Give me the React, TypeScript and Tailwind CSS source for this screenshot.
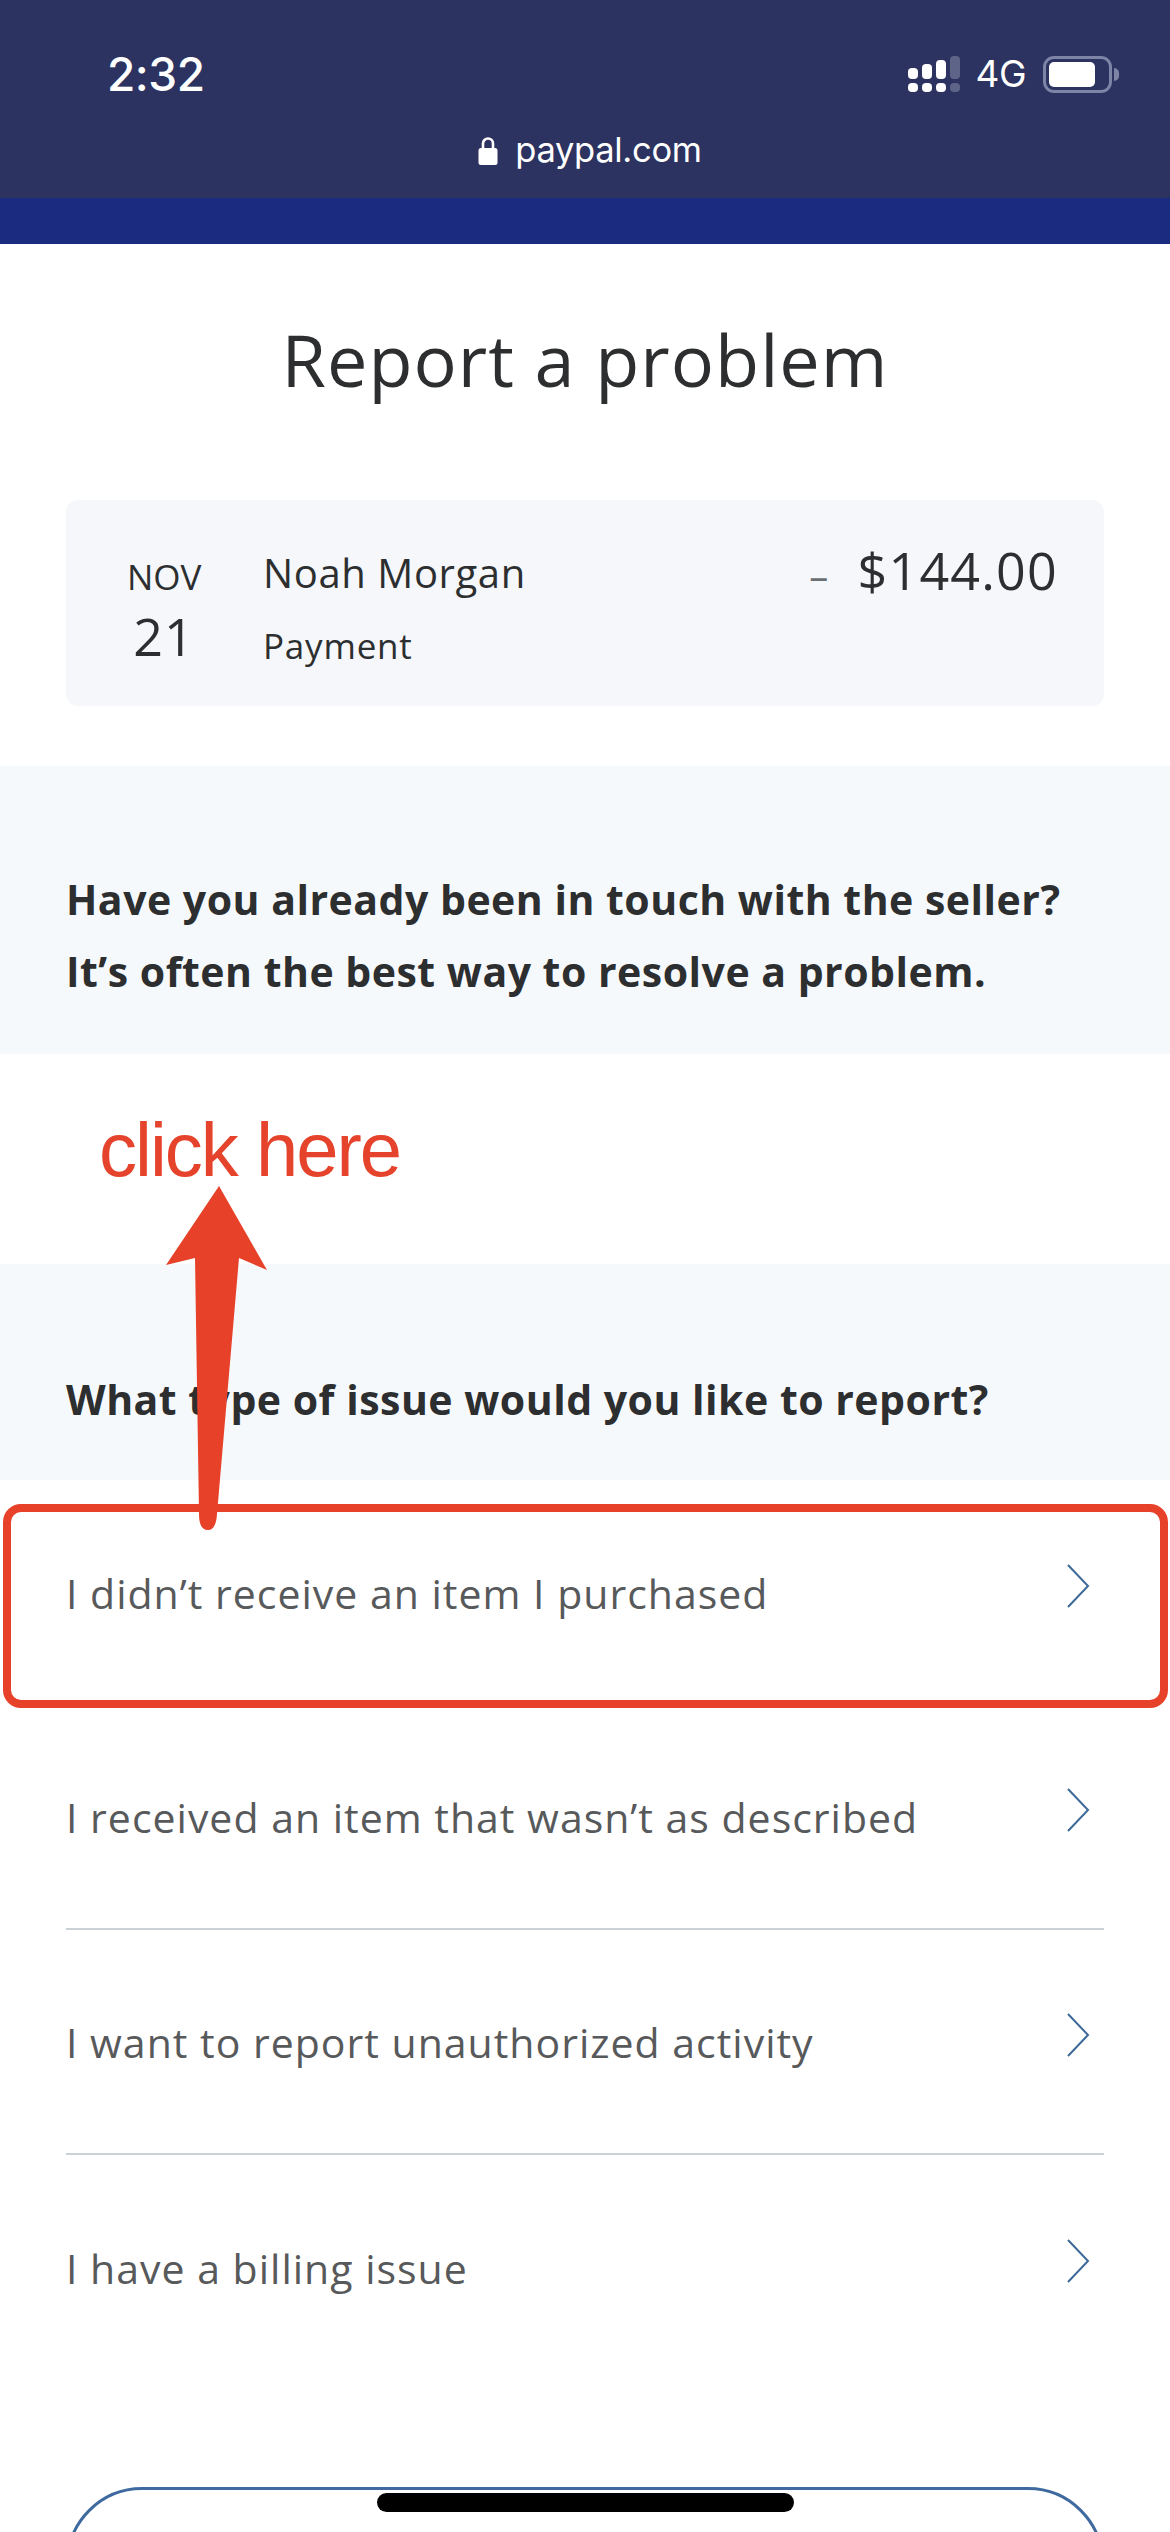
const ISSUES = [
  { label: 'I didn’t receive an item I purchased', divider: false },
  { label: 'I received an item that wasn’t as described', divider: true },
  { label: 'I want to report unauthorized activity', divider: true },
  { label: 'I have a billing issue', divider: false },
]

function SignalIcon() {
  return (
    <svg width="52" height="36" viewBox="0 0 52 36">
      <g fill="#ffffff">
        <rect x="0" y="12" width="10" height="11" rx="4" />
        <rect x="14" y="8" width="10" height="15" rx="4" />
        <rect x="28" y="4" width="10" height="19" rx="4" />
        <rect x="0" y="27" width="10" height="9" rx="4" />
        <rect x="14" y="27" width="10" height="9" rx="4" />
        <rect x="28" y="27" width="10" height="9" rx="4" />
      </g>
      <g fill="#5d6488">
        <rect x="42" y="0" width="10" height="23" rx="4" />
        <rect x="42" y="27" width="10" height="9" rx="4" />
      </g>
    </svg>
  )
}

function BatteryIcon() {
  return (
    <div className="flex items-center gap-[2px]">
      <div className="w-[69px] h-[37px] rounded-[11px] border-[3px] border-[#7e84a6] p-[3px]">
        <div className="w-[46px] h-full rounded-[5px] bg-white" />
      </div>
      <div className="w-[5px] h-[13px] rounded-r-full bg-[#7e84a6]" />
    </div>
  )
}

function LockIcon() {
  return (
    <svg width="20" height="29" viewBox="0 0 20 29">
      <path d="M5 13V7.5a5 5 0 0 1 10 0V13" fill="none" stroke="#ffffff" strokeWidth="2.6" />
      <rect x="0.5" y="12" width="19" height="17" rx="2.5" fill="#ffffff" />
    </svg>
  )
}

function Chevron() {
  return (
    <svg className="mb-[14px] mr-[14px]" width="24" height="46" viewBox="0 0 24 46">
      <path d="M2 2 L22 23 L2 44" fill="none" stroke="#3d6a99" strokeWidth="2" />
    </svg>
  )
}

function Annotation() {
  return (
    <>
      <div className="absolute left-[99px] top-[1098px] font-['Liberation_Sans',sans-serif] text-[76px] leading-[104px] tracking-[-2px] text-[#e5432c]">
        click here
      </div>
      <div className="absolute left-[3px] top-[1504px] w-[1165px] h-[204px] rounded-[18px] border-[8px] border-[#e8412a]" />
      <svg className="absolute left-0 top-0" width="1170" height="2532" viewBox="0 0 1170 2532">
        <path
          d="M219 1186 L267 1270 L239 1258 L217 1514 Q216 1530 208 1530 Q199 1530 199 1514 L195 1258 L166 1265 Z"
          fill="#e8412a"
        />
      </svg>
    </>
  )
}

export default function App() {
  return (
    <div className="relative w-[1170px] h-[2532px] overflow-hidden bg-white font-['Open_Sans',sans-serif] text-[#2c2e2f]">
      {/* Browser chrome */}
      <div className="h-[198px] bg-[#2c3360] text-white flex flex-col">
        <div className="flex items-center justify-between pl-[107px] pr-[51px] pt-[48px]">
          <span className="font-['Inter',sans-serif] font-medium text-[46px] leading-[52px] tracking-[-0.5px]">2:32</span>
          <div className="flex items-center">
            <SignalIcon />
            <span className="ml-[15px] mr-[17px] font-['Inter',sans-serif] text-[37px] leading-[44px] tracking-[-0.5px]">4G</span>
            <BatteryIcon />
          </div>
        </div>
        <div className="flex items-center justify-center gap-[17px] mt-[28px] pl-[10px]">
          <LockIcon />
          <span className="font-['Inter',sans-serif] text-[34.5px] leading-[44px] tracking-[-0.3px]">paypal.com</span>
        </div>
      </div>
      <div className="h-[46px] bg-[#1b2b80]" />

      <h1 className="mt-[75px] text-center font-normal text-[72px] leading-[80px] tracking-[1px]">Report a problem</h1>

      {/* Transaction */}
      <div className="mt-[101px] mx-[66px] h-[206px] rounded-[12px] bg-[#f5f7fa] flex pl-[61px] pr-[46px]">
        <div className="w-[74px] pt-[53px] text-center">
          <div className="text-[35px] leading-[48px]">NOV</div>
          <div className="mt-[7px] text-[52px] leading-[56px] tracking-[1px]">21</div>
        </div>
        <div className="ml-[62px] pt-[47px]">
          <div className="text-[40px] leading-[52px] tracking-[0.6px]">Noah Morgan</div>
          <div className="mt-[25px] text-[35px] leading-[44px] tracking-[0.8px]">Payment</div>
        </div>
        <div className="ml-auto pt-[42px] text-[52px] leading-[56px] tracking-[1.2px]">
          <span className="mr-[28px] text-[#6b6f72] text-[38px]">–</span>$144.00
        </div>
      </div>

      {/* Seller prompt */}
      <div className="mt-[60px] h-[288px] bg-[#f6f9fc] pl-[66px] pt-[97px] font-bold text-[41px] leading-[72px] tracking-[0.5px]">
        <p>Have you already been in touch with the seller?</p>
        <p>It’s often the best way to resolve a problem.</p>
      </div>

      {/* Issue heading */}
      <div className="mt-[210px] h-[216px] bg-[#f6f9fc] pl-[66px] pt-[99px] font-bold text-[41px] leading-[72px] tracking-[0.5px]">
        What type of issue would you like to report?
      </div>

      {/* Issue list */}
      <div className="mx-[66px]">
        {ISSUES.map(issue => (
          <div
            key={issue.label}
            className={`h-[225px] flex items-center justify-between ${issue.divider ? 'border-b-2 border-[#cbd2d6]' : ''}`}
          >
            <span className="text-[41px] leading-[52px] tracking-[1px] text-[#57595b]">{issue.label}</span>
            <Chevron />
          </div>
        ))}
      </div>

      {/* Cut-off button */}
      <div className="mt-[107px] mx-[66px] h-[120px] rounded-t-[76px] border-[3px] border-[#3f6aa0]" />

      <Annotation />

      {/* Home indicator */}
      <div className="absolute left-[377px] top-[2493px] w-[417px] h-[19px] rounded-full bg-black" />
    </div>
  )
}
